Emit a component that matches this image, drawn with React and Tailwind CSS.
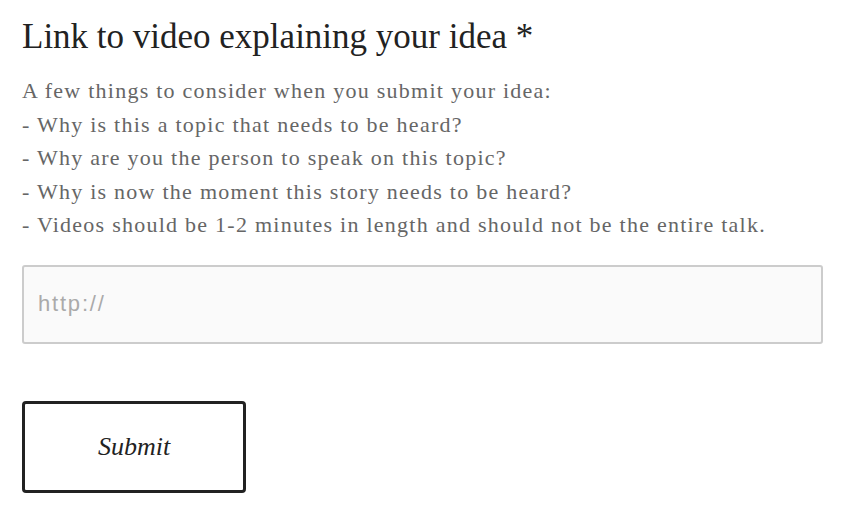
export default function App() {
  const tips = [
    "A few things to consider when you submit your idea:",
    "- Why is this a topic that needs to be heard?",
    "- Why are you the person to speak on this topic?",
    "- Why is now the moment this story needs to be heard?",
    "- Videos should be 1-2 minutes in length and should not be the entire talk.",
  ]

  return (
    <div className="min-h-screen bg-white px-[22px] pt-[15px] font-['Liberation_Serif',serif]">
      <h2 className="text-[35px] leading-[44px] text-[#222]">Link to video explaining your idea *</h2>

      <div className="mt-[15px] text-[22px] leading-[33.5px] tracking-[1.25px] text-[#666]">
        {tips.map((line) => (
          <p key={line}>{line}</p>
        ))}
      </div>

      <input
        type="text"
        placeholder="http://"
        className="mt-[23px] block h-[79px] w-[801px] rounded-[3px] border-2 border-[#ccc] bg-[#fafafa] px-[14px] font-['Liberation_Sans',sans-serif] text-[22px] tracking-[1.8px] text-[#333] placeholder:text-[#aaa] outline-none"
      />

      <button className="mt-[57px] block h-[92px] w-[224px] rounded-[4px] border-[3px] border-[#222] bg-white text-[26px] italic text-[#222]">
        Submit
      </button>
    </div>
  )
}
